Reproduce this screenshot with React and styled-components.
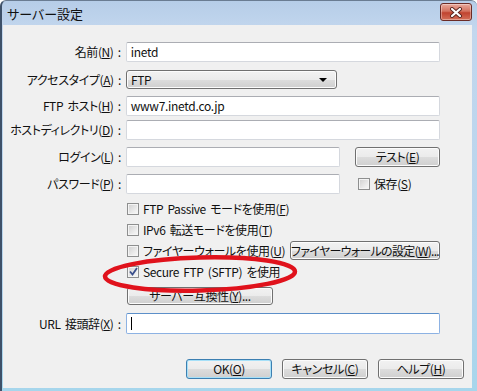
import styled, { createGlobalStyle } from 'styled-components';

const Global = createGlobalStyle`
    body {
        margin: 0;
        background: #ffffff;
    }
`;

const Frame = styled.div`
    position: relative;
    width: 477px;
    height: 391px;
    box-sizing: border-box;
    display: flex;
    flex-direction: column;
    background: linear-gradient(#b6cde8, #c3d7ee 30px, #b4d4ec 300px, #a6d6ec);
    border-left: 2px solid #3e5169;
    border-top: 1px solid #6a7c92;
    border-top-left-radius: 6px;
    border-top-right-radius: 6px;
    font-family: 'Noto Sans CJK JP', 'Liberation Sans', sans-serif;
    font-feature-settings: 'palt' 1;
    font-size: 12px;
    letter-spacing: -0.4px;
    word-spacing: 2px;
    color: #111;
    overflow: hidden;
`;

const TitleBar = styled.div`
    height: 24px;
    display: flex;
    align-items: center;
    justify-content: space-between;
    padding: 0 5px 0 5px;
    font-size: 13px;
    letter-spacing: 0;
`;

const CloseBtn = styled.div`
    width: 30px;
    height: 16px;
    margin-top: -2px;
    border: 1px solid #6b2b26;
    border-radius: 3px;
    display: flex;
    align-items: center;
    justify-content: center;
    background: linear-gradient(#e9a99c, #d3725f 45%, #c0432f 55%, #d4705a);
    box-shadow: inset 0 0 0 1px rgba(255, 255, 255, 0.35);
`;

const Body = styled.div`
    flex: 1;
    margin: 0 5px 3px 1px;
    background: #f0f0f0;
    padding-top: 17px;
    box-sizing: border-box;
`;

const Form = styled.div`
    width: 437px;
    display: flex;
    flex-direction: column;
`;

const Row = styled.div`
    display: flex;
    align-items: center;
    margin-top: ${(p) => p.mt || 0}px;
`;

const Label = styled.div`
    width: 118px;
    margin-right: 5px;
    text-align: right;
    white-space: nowrap;
    line-height: 14px;
`;

const Input = styled.div`
    box-sizing: border-box;
    width: ${(p) => p.w}px;
    height: ${(p) => p.h || 20}px;
    background: #fff;
    border: 1px solid ${(p) => (p.focused ? '#8db2e3' : '#d5d8de')};
    border-top-color: ${(p) => (p.focused ? '#5c8fc9' : '#abadb3')};
    border-radius: 2px;
    padding-left: 4px;
    display: flex;
    align-items: center;
    line-height: 14px;
    letter-spacing: -0.3px;
`;

const Caret = styled.span`
    display: block;
    width: 1px;
    height: 13px;
    background: #000;
`;

const Select = styled.div`
    box-sizing: border-box;
    width: 211px;
    height: 19px;
    border: 1px solid #707070;
    border-radius: 3px;
    background: linear-gradient(#f2f2f2, #ebebeb 50%, #dddddd 50%, #cfcfcf);
    box-shadow: inset 0 0 0 1px #fcfcfc;
    display: flex;
    align-items: center;
    justify-content: space-between;
    padding: 0 9px 0 4px;
    line-height: 14px;
`;

const Arrow = styled.span`
    width: 0;
    height: 0;
    border-left: 4px solid transparent;
    border-right: 4px solid transparent;
    border-top: 4px solid #000;
`;

const Button = styled.div`
    box-sizing: border-box;
    width: ${(p) => p.w}px;
    height: ${(p) => p.h || 20}px;
    margin-left: ${(p) => (p.ml === 'auto' ? 'auto' : `${p.ml || 0}px`)};
    border: 1px solid ${(p) => (p.primary ? '#3c7fb1' : '#707070')};
    border-radius: 3px;
    background: linear-gradient(#f2f2f2, #ebebeb 50%, #dddddd 50%, #cfcfcf);
    box-shadow: inset 0 0 0 1px ${(p) => (p.primary ? '#a6e0f8' : '#fcfcfc')};
    display: flex;
    align-items: center;
    justify-content: center;
    white-space: nowrap;
    line-height: 14px;
    letter-spacing: ${(p) => (p.tight ? '-0.7px' : '-0.4px')};
`;

const CheckRow = styled.div`
    height: 21px;
    display: flex;
    align-items: center;
    margin-left: 124px;
    margin-top: ${(p) => p.mt || 0}px;
`;

const Box = styled.span`
    box-sizing: border-box;
    width: 12px;
    height: 12px;
    flex: none;
    margin-left: ${(p) => p.ml || 0}px;
    margin-right: 4px;
    border: 1px solid #8e8f8f;
    background: linear-gradient(135deg, #cfcfcf, #eeeeee 70%, #f8f8f8);
    box-shadow: inset 0 0 0 1px #f4f4f4;
    display: flex;
    align-items: center;
    justify-content: center;
`;

const Text = styled.span`
    white-space: nowrap;
    line-height: 14px;
`;

const Footer = styled.div`
    display: flex;
    justify-content: flex-end;
    gap: 10px;
    padding-right: 8px;
    margin-top: 25px;
`;

const Mark = styled.svg`
    position: absolute;
    left: 0;
    top: 0;
    pointer-events: none;
`;

function Check({ checked, ml }) {
    return (
        <Box ml={ml}>
            {checked && (
                <svg width="9" height="9" viewBox="0 0 9 9">
                    <path d="M1 4.5 L3.5 7.5 L8 1" fill="none" stroke="#3b4f8c" strokeWidth="1.8" />
                </svg>
            )}
        </Box>
    );
}

export default function App() {
    return (
        <>
            <Global />
            <Frame>
                <TitleBar>
                    <span>サーバー設定</span>
                    <CloseBtn>
                        <svg width="14" height="11" viewBox="0 0 14 11">
                            <path d="M3 2 L11 9 M11 2 L3 9" stroke="#5a2620" strokeWidth="4" strokeLinecap="round" />
                            <path d="M3 2 L11 9 M11 2 L3 9" stroke="#ffffff" strokeWidth="2.2" strokeLinecap="round" />
                        </svg>
                    </CloseBtn>
                </TitleBar>
                <Body>
                    <Form>
                        <Row>
                            <Label>名前(<u>N</u>) :</Label>
                            <Input w={315}>inetd</Input>
                        </Row>
                        <Row mt={8}>
                            <Label>アクセスタイプ(<u>A</u>) :</Label>
                            <Select>
                                <span>FTP</span>
                                <Arrow />
                            </Select>
                        </Row>
                        <Row mt={7}>
                            <Label>FTP ホスト(<u>H</u>) :</Label>
                            <Input w={315}>www7.inetd.co.jp</Input>
                        </Row>
                        <Row mt={4}>
                            <Label>ホストディレクトリ(<u>D</u>) :</Label>
                            <Input w={315} />
                        </Row>
                        <Row mt={7}>
                            <Label>ログイン(<u>L</u>) :</Label>
                            <Input w={214} />
                            <Button w={85} ml="auto">テスト(<u>E</u>)</Button>
                        </Row>
                        <Row mt={7}>
                            <Label>パスワード(<u>P</u>) :</Label>
                            <Input w={214} />
                            <Check ml={18} />
                            <Text>保存(<u>S</u>)</Text>
                        </Row>
                        <CheckRow mt={4}>
                            <Check />
                            <Text>FTP Passive モードを使用(<u>F</u>)</Text>
                        </CheckRow>
                        <CheckRow>
                            <Check />
                            <Text>IPv6 転送モードを使用(<u>T</u>)</Text>
                        </CheckRow>
                        <CheckRow>
                            <Check />
                            <Text>ファイヤーウォールを使用(<u>U</u>)</Text>
                            <Button w={150} h={19} ml="auto" tight>ファイヤーウォールの設定(<u>W</u>)...</Button>
                        </CheckRow>
                        <CheckRow>
                            <Check checked />
                            <Text>Secure FTP (SFTP) を使用</Text>
                        </CheckRow>
                        <Row mt={5}>
                            <Button w={146} h={18} ml={124}>サーバー互換性(<u>Y</u>)...</Button>
                        </Row>
                        <Row mt={8}>
                            <Label>URL 接頭辞(<u>X</u>) :</Label>
                            <Input w={315} h={21} focused>
                                <Caret />
                            </Input>
                        </Row>
                    </Form>
                    <Footer>
                        <Button w={86} primary>OK(<u>O</u>)</Button>
                        <Button w={86}>キャンセル(<u>C</u>)</Button>
                        <Button w={86}>ヘルプ(<u>H</u>)</Button>
                    </Footer>
                </Body>
                <Mark width="477" height="391">
                    <ellipse
                        cx="198"
                        cy="273"
                        rx="95"
                        ry="16.5"
                        transform="rotate(-1.5 198 273)"
                        fill="none"
                        stroke="#e0121c"
                        strokeWidth="4.5"
                    />
                </Mark>
            </Frame>
        </>
    );
}
